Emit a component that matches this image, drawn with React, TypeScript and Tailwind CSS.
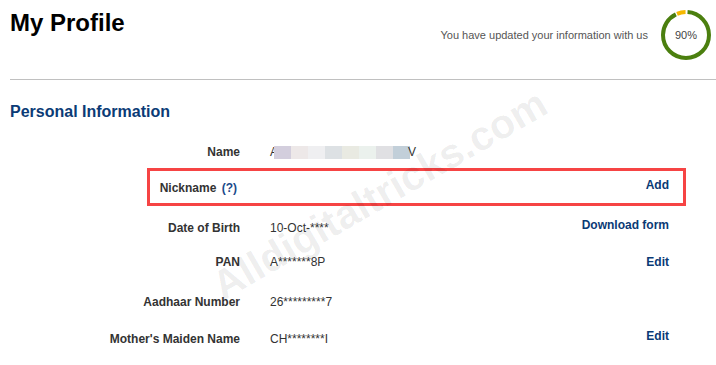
import React from 'react'

const blocks = ['#d3cedd', '#ede8e8', '#efeff1', '#dde1e4', '#e9eae2', '#ebf1ed', '#e0e0e3', '#c2cfd9']

function ProgressRing() {
  return (
    <svg width="50" height="50" viewBox="0 0 50 50" className="shrink-0">
      <g transform="rotate(-90 25 25)">
        <circle cx="25" cy="25" r="23" fill="none" stroke="#4b7f0f" strokeWidth="4" strokeDasharray="131.5 200" strokeDashoffset="-1.6" />
        <circle cx="25" cy="25" r="23" fill="none" stroke="#f5b800" strokeWidth="4" strokeDasharray="8.7 200" strokeDashoffset="-134.4" />
      </g>
      <text x="25" y="29" textAnchor="middle" fontSize="11" fill="#444" fontFamily="'Liberation Sans', Arial, sans-serif">
        90%
      </text>
    </svg>
  )
}

function Row({
  label,
  value,
  link,
  h,
  raised = true,
  children,
}: {
  label: React.ReactNode
  value?: React.ReactNode
  link?: string
  h: string
  raised?: boolean
  children?: React.ReactNode
}) {
  return (
    <div className={`relative flex items-center ${h}`}>
      <div className="w-[240px] shrink-0 text-right text-[12px] leading-4 font-bold text-[#333]">{label}</div>
      <div className="ml-[30px] flex-1 text-[12px] leading-4 text-[#333]">{value}</div>
      {link && (
        <a className={`mr-[47px] text-[12px] leading-4 font-bold text-[#0a3a75] cursor-pointer ${raised ? 'mb-[6px]' : ''}`}>
          {link}
        </a>
      )}
      {children}
    </div>
  )
}

export default function App() {
  return (
    <div className="relative w-[716px] h-[365px] overflow-hidden bg-white font-['Liberation_Sans',Arial,sans-serif]">
      <div className="flex h-[79px] items-start justify-between">
        <h1 className="ml-[10px] pt-[9px] text-[24px] leading-7 font-bold text-black">My Profile</h1>
        <div className="mt-[10px] mr-[5px] flex items-center gap-[13px]">
          <span className="text-[11px] leading-4 text-[#555]">You have updated your information with us</span>
          <ProgressRing />
        </div>
      </div>
      <div className="ml-[10px] h-px bg-[#c0c0c0]" />

      <h2 className="mt-[22px] ml-[10px] text-[16px] leading-5 font-bold text-[#0b3b76]">Personal Information</h2>

      <div className="mt-[12px]">
        <Row
          h="h-[36px]"
          label="Name"
          value={
            <span className="inline-flex items-center">
              A
              <span className="-ml-[4px] inline-flex">
                {blocks.map((c) => (
                  <span key={c} className="block h-[13px] w-[17px]" style={{ backgroundColor: c }} />
                ))}
              </span>
              <span className="-ml-[2px]">V</span>
            </span>
          }
        />
        <Row
          h="h-[36px]"
          label={
            <span className="mr-[3px]">
              Nickname <span className="ml-[2px] text-[#1a4a8a]">(?)</span>
            </span>
          }
          link="Add"
        >
          <div className="pointer-events-none absolute -top-[2px] bottom-0 left-[147px] right-[30px] border-[3px] border-[#f64444]" />
        </Row>
        <Row h="h-[44px]" label="Date of Birth" value="10-Oct-****" link="Download form" />
        <Row h="h-[24px]" label="PAN" value="A*******8P" link="Edit" raised={false} />
        <Row h="h-[56px]" label="Aadhaar Number" value="26*********7" />
        <Row h="h-[18px]" label="Mother's Maiden Name" value="CH********I" link="Edit" />
      </div>

      <div className="pointer-events-none absolute left-[380px] top-[195px] -translate-x-1/2 -translate-y-1/2 -rotate-30 whitespace-nowrap text-[41px] font-bold text-black/[0.07]">
        Alldigitaltricks.com
      </div>
    </div>
  )
}
